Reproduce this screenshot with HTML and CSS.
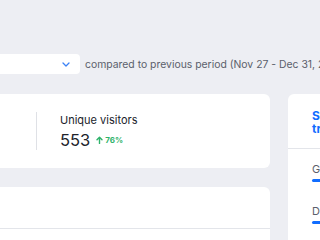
FILE: index.html
```html
<!DOCTYPE html>
<html>
<head>
<meta charset="utf-8">
<link rel="stylesheet" href="styles.css">
</head>
<body>
<div class="page">
  <div class="filters">
    <div class="select">
      <span class="select-text">Last 30 days</span>
      <svg class="chev" width="8" height="5" viewBox="0 0 8 5"><path d="M1 1l3 3 3-3" fill="none" stroke="#3b82f6" stroke-width="1.3" stroke-linecap="round" stroke-linejoin="round"/></svg>
    </div>
    <span class="compare">compared to previous period (Nov 27 - Dec 31, 2023)</span>
  </div>
  <div class="grid">
    <div class="main">
      <div class="card stats">
        <div class="stat first">
          <div class="label">Site sessions</div>
          <div class="value">612</div>
        </div>
        <div class="divider"></div>
        <div class="stat">
          <div class="label">Unique visitors</div>
          <div class="value">553 <span class="delta"><svg width="7" height="8" viewBox="0 0 7 8"><path d="M3.5 7.5V1.5M1 3.8L3.5 1.2 6 3.8" fill="none" stroke="#2fb36b" stroke-width="1.4" stroke-linecap="round" stroke-linejoin="round"/></svg>76%</span></div>
        </div>
      </div>
      <div class="card chart">
        <div class="chart-head"></div>
      </div>
    </div>
    <div class="card side">
      <div class="side-title">Sessions by<br>traffic source</div>
      <div class="side-list">
        <div class="src">
          <div class="src-name">Google</div>
          <div class="bar"></div>
        </div>
        <div class="src">
          <div class="src-name">Direct</div>
          <div class="bar"></div>
        </div>
      </div>
    </div>
  </div>
</div>
</body>
</html>
```
FILE: styles.css
```css
html, body {
  margin: 0;
  padding: 0;
  background: #edeef3;
  overflow: hidden;
  font-family: Inter, "Noto Sans", sans-serif;
  color: #20232b;
}
.page {
  padding-top: 54px;
}
.filters {
  display: flex;
  align-items: center;
  gap: 5px;
  height: 20px;
}
.select {
  flex-shrink: 0;
  margin-left: -120px;
  width: 200px;
  height: 20px;
  background: #fff;
  border-radius: 4px;
  display: flex;
  align-items: center;
  justify-content: space-between;
  padding: 0 10px 0 10px;
  box-sizing: border-box;
  font-size: 11px;
}
.select-text {
  color: #20232b;
}
.chev {
  display: block;
}
.compare {
  font-size: 10.4px;
  color: #5b5f6b;
  white-space: nowrap;
}
.grid {
  margin-top: 20px;
  display: grid;
  grid-template-columns: 390px 1fr;
  column-gap: 18px;
  margin-left: -120px;
}
.main {
  display: flex;
  flex-direction: column;
  gap: 19px;
}
.card {
  background: #fff;
  border-radius: 6px;
}
.stats {
  height: 74px;
  display: flex;
  align-items: center;
}
.stat {
  padding-left: 23px;
}
.stat.first {
  width: 136px;
  padding-left: 20px;
}
.divider {
  width: 1px;
  height: 38px;
  background: #dfe1e6;
}
.label {
  font-size: 11px;
  color: #20232b;
  line-height: 14px;
}
.value {
  margin-top: 3px;
  font-size: 16.5px;
  line-height: 20px;
  display: flex;
  align-items: center;
  gap: 6px;
}
.delta {
  display: flex;
  align-items: center;
  gap: 2px;
  font-size: 8px;
  font-weight: 700;
  color: #2fb36b;
}
.delta svg {
  display: block;
}
.chart {
  height: 80px;
}
.chart-head {
  height: 41px;
  border-bottom: 1px solid #e3e5ea;
}
.side {
  border-radius: 6px 0 0 6px;
  height: 200px;
}
.side-title {
  padding: 15px 0 0 24px;
  font-size: 12px;
  font-weight: 700;
  line-height: 13px;
  color: #116dff;
  height: 55px;
  box-sizing: border-box;
  border-bottom: 1px solid #e3e5ea;
  white-space: nowrap;
}
.side-list {
  padding: 14px 0 0 24px;
  display: flex;
  flex-direction: column;
  gap: 23px;
}
.src-name {
  font-size: 11px;
  line-height: 13px;
  color: #5b5f6b;
}
.bar {
  margin-top: 3px;
  height: 3px;
  width: 60px;
  border-radius: 2px;
  background: #116dff;
}
```
